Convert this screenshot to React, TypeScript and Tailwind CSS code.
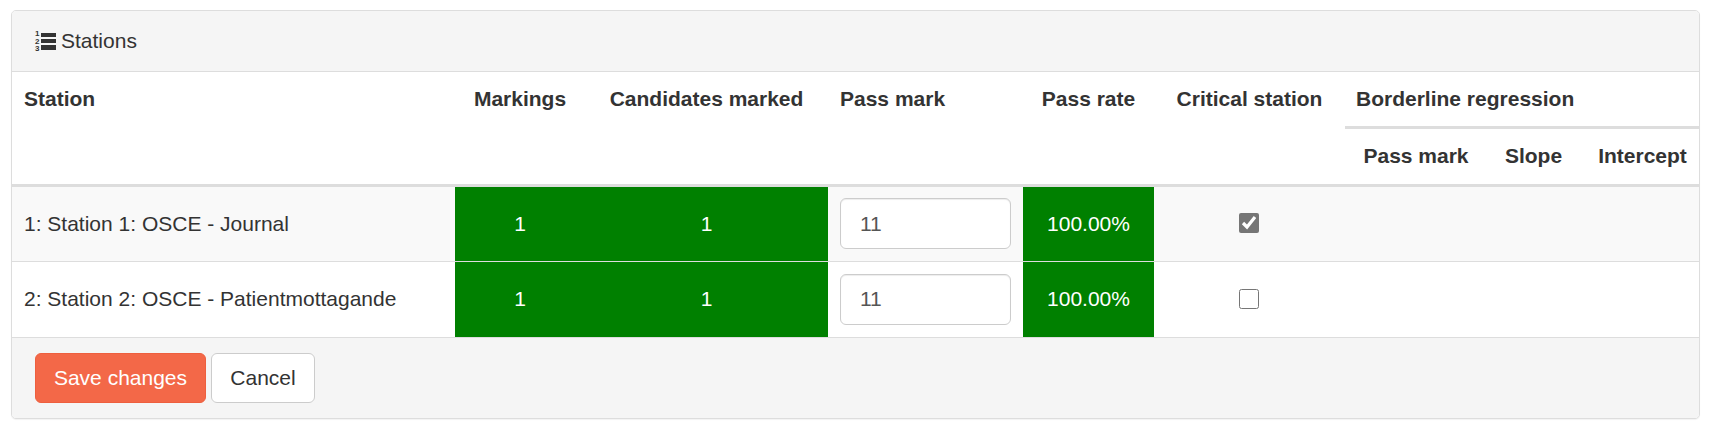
const stations = [
  { name: "1: Station 1: OSCE - Journal", critical: true, rowBg: "bg-[#f9f9f9]" },
  { name: "2: Station 2: OSCE - Patientmottagande", critical: false, rowBg: "bg-white" },
];

function ListOlIcon() {
  return (
    <svg width="22" height="22" viewBox="0 0 22 22" className="shrink-0 fill-[#333]">
      <text x="1" y="6" fontSize="8" fontWeight="bold" fontFamily="Liberation Sans">1</text>
      <text x="1" y="13.5" fontSize="8" fontWeight="bold" fontFamily="Liberation Sans">2</text>
      <text x="1" y="21" fontSize="8" fontWeight="bold" fontFamily="Liberation Sans">3</text>
      <rect x="7" y="3" width="15" height="4" />
      <rect x="7" y="9" width="15" height="4" />
      <rect x="7" y="15" width="15" height="5" />
    </svg>
  );
}

export default function App() {
  return (
    <div className="bg-white px-[11px] pt-[10px] pb-2 text-[21px] leading-[30px] text-[#333] font-['Liberation_Sans',Arial,sans-serif]">
      <div className="overflow-hidden rounded-[5px] border border-[#ddd] bg-white shadow-[0_1px_1px_rgba(0,0,0,0.05)]">
        {/* Panel heading */}
        <div className="flex h-[61px] items-center gap-[5px] border-b border-[#ddd] bg-[#f5f5f5] pl-[22px]">
          <ListOlIcon />
          <span>Stations</span>
        </div>

        {/* Stations table */}
        <table className="w-full table-fixed border-collapse">
          <colgroup>
            <col className="w-[443px]" />
            <col className="w-[130px]" />
            <col className="w-[243px]" />
            <col className="w-[195px]" />
            <col className="w-[131px]" />
            <col className="w-[191px]" />
            <col className="w-[142px]" />
            <col className="w-[93px]" />
            <col />
          </colgroup>
          <thead>
            <tr>
              <th rowSpan={2} className="border-b-[3px] border-[#ddd] px-3 pt-[12px] align-top text-left font-bold">Station</th>
              <th rowSpan={2} className="border-b-[3px] border-[#ddd] pt-[12px] align-top font-bold">Markings</th>
              <th rowSpan={2} className="border-b-[3px] border-[#ddd] pt-[12px] align-top font-bold">Candidates marked</th>
              <th rowSpan={2} className="border-b-[3px] border-[#ddd] px-3 pt-[12px] align-top text-left font-bold">Pass mark</th>
              <th rowSpan={2} className="border-b-[3px] border-[#ddd] pt-[12px] align-top font-bold">Pass rate</th>
              <th rowSpan={2} className="border-b-[3px] border-[#ddd] pt-[12px] align-top font-bold">Critical station</th>
              <th colSpan={3} className="h-[55px] border-b-[3px] border-[#ddd] pl-[11px] pt-[12px] align-top text-left font-bold">Borderline regression</th>
            </tr>
            <tr>
              <th className="h-[58px] border-b-[3px] border-[#ddd] font-bold">Pass mark</th>
              <th className="h-[58px] border-b-[3px] border-[#ddd] font-bold">Slope</th>
              <th className="h-[58px] border-b-[3px] border-[#ddd] pl-[6px] font-bold">Intercept</th>
            </tr>
          </thead>
          <tbody>
            {stations.map((s) => (
              <tr key={s.name} className={s.rowBg}>
                <td className="h-[76px] border-b border-[#ddd] px-3">{s.name}</td>
                <td className="border-b border-[#ddd] bg-[#008000] text-center text-white">1</td>
                <td className="border-b border-[#ddd] bg-[#008000] text-center text-white">1</td>
                <td className="border-b border-[#ddd] px-3">
                  <input
                    type="text"
                    defaultValue="11"
                    className="block h-[51px] w-full rounded-[6px] border border-[#ccc] bg-white px-[19px] text-[#555] shadow-[inset_0_1px_1px_rgba(0,0,0,0.075)]"
                  />
                </td>
                <td className="border-b border-[#ddd] bg-[#008000] text-center text-white">100.00%</td>
                <td className="border-b border-[#ddd] text-center">
                  <input
                    type="checkbox"
                    defaultChecked={s.critical}
                    className="mr-[2px] mb-[3px] h-[20px] w-[20px] accent-[#767676] align-middle"
                  />
                </td>
                <td className="border-b border-[#ddd]"></td>
                <td className="border-b border-[#ddd]"></td>
                <td className="border-b border-[#ddd]"></td>
              </tr>
            ))}
          </tbody>
        </table>

        {/* Panel footer */}
        <div className="flex gap-[5px] bg-[#f5f5f5] px-[23px] pt-[15px] pb-[15px]">
          <button className="h-[50px] w-[171px] rounded-[6px] border border-[#ee5f3e] bg-[#f36848] text-white">Save changes</button>
          <button className="h-[50px] w-[104px] rounded-[6px] border border-[#ccc] bg-white">Cancel</button>
        </div>
      </div>
    </div>
  );
}
